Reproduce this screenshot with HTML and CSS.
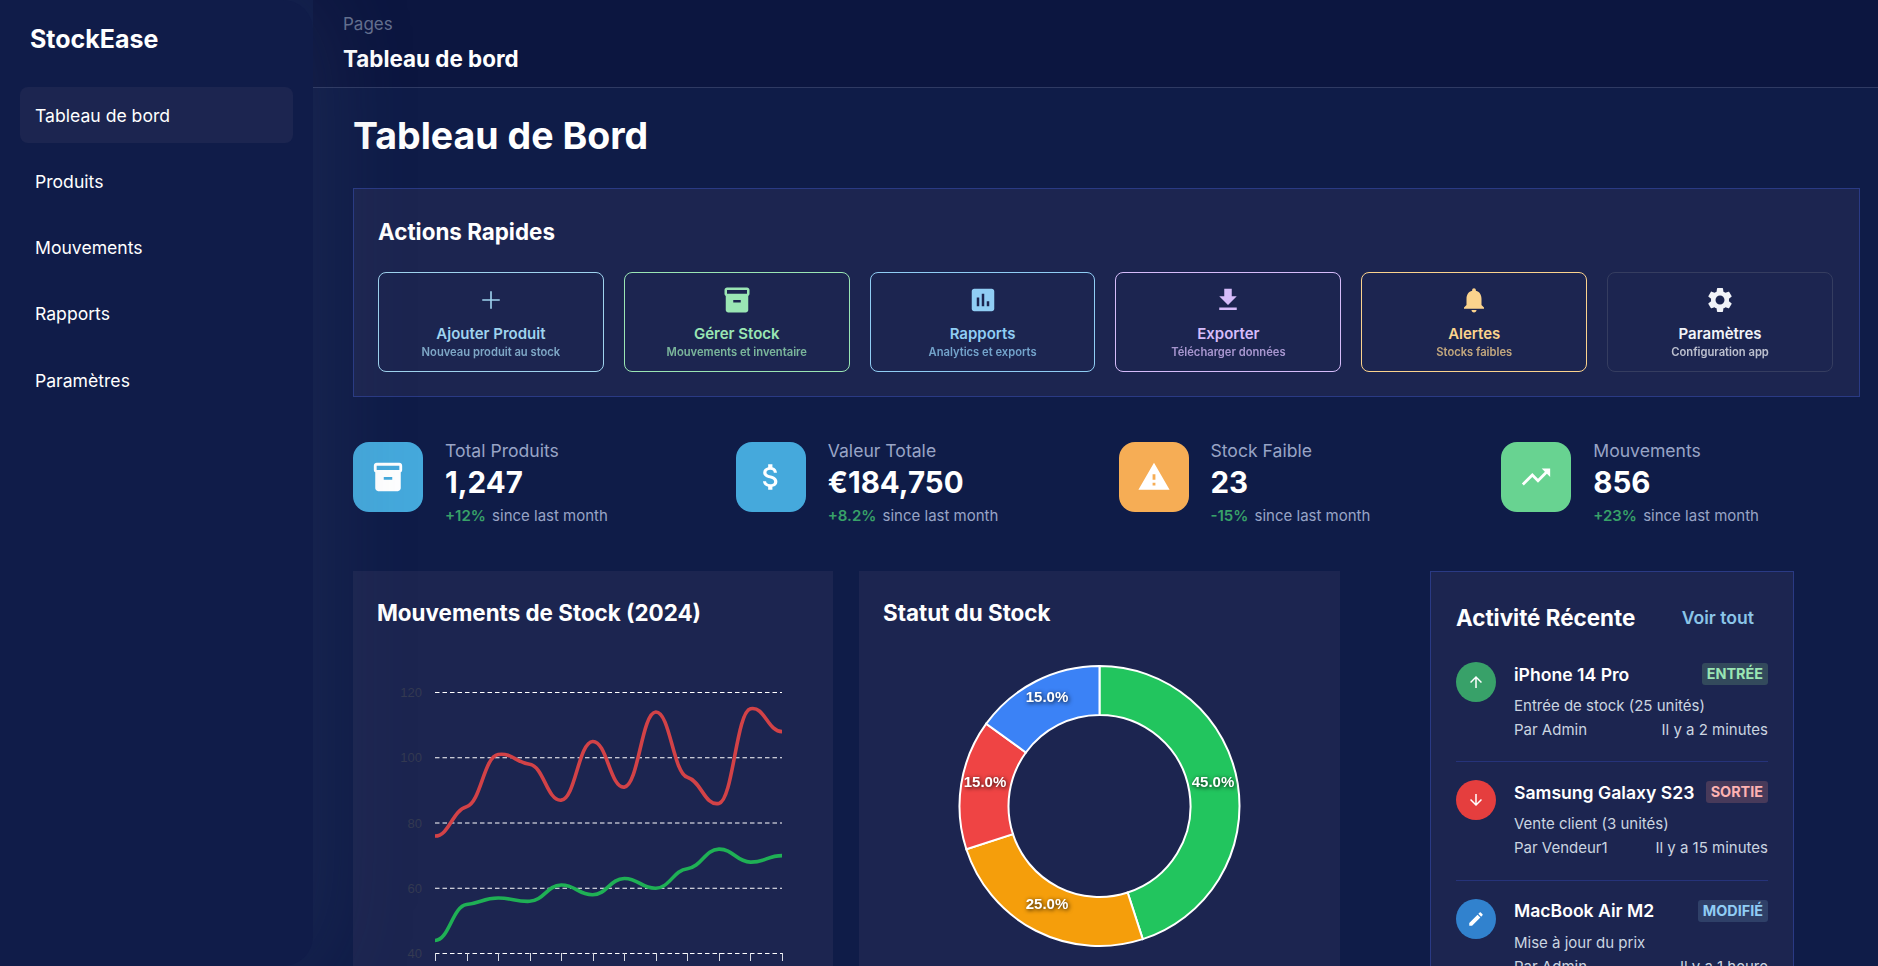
FILE: index.html
```html
<!DOCTYPE html>
<html lang="fr">
<head>
    <meta charset="UTF-8">
    <meta name="viewport" content="width=device-width, initial-scale=1.0">
    <title>StockEase</title>
    <link rel="stylesheet" href="styles.css">
</head>
<body>
<div class="layout">
    <aside class="sidebar">
        <div class="brand">StockEase</div>
        <nav class="side-nav">
            <a class="nav-item active">Tableau de bord</a>
            <a class="nav-item">Produits</a>
            <a class="nav-item">Mouvements</a>
            <a class="nav-item">Rapports</a>
            <a class="nav-item">Paramètres</a>
        </nav>
    </aside>

    <div class="main">
        <header class="topbar">
            <div class="crumb">Pages</div>
            <div class="crumb-title">Tableau de bord</div>
        </header>

        <main class="content">
            <h1 class="page-title">Tableau de Bord</h1>

            <section class="quick-card">
                <h2 class="quick-title">Actions Rapides</h2>
                <div class="quick-grid">
                    <a class="quick-btn blue">
                        <svg class="quick-icon" viewBox="0 0 24 24"><path d="M12 5v14M5 12h14" fill="none" stroke="currentColor" stroke-width="1.3"/></svg>
                        <span class="quick-label">Ajouter Produit</span>
                        <span class="quick-sub">Nouveau produit au stock</span>
                    </a>
                    <a class="quick-btn green">
                        <svg class="quick-icon" viewBox="0 0 24 24"><path d="M20 2H4c-1 0-2 .9-2 2v3.01c0 .72.43 1.34 1 1.69V20c0 1.1 1.1 2 2 2h14c.9 0 2-.9 2-2V8.7c.57-.35 1-.97 1-1.69V4c0-1.1-1-2-2-2zm-5 12H9v-2h6v2zm5-7H4V4l16-.02V7z"/></svg>
                        <span class="quick-label">Gérer Stock</span>
                        <span class="quick-sub">Mouvements et inventaire</span>
                    </a>
                    <a class="quick-btn sky">
                        <svg class="quick-icon" viewBox="0 0 24 24"><path d="M19 3H5c-1.1 0-2 .9-2 2v14c0 1.1.9 2 2 2h14c1.100 0 2-.9 2-2V5c0-1.100-.9-2-2-2zM9 17H7v-7h2v7zm4 0h-2V7h2v10zm4 0h-2v-4h2v4z"/></svg>
                        <span class="quick-label">Rapports</span>
                        <span class="quick-sub">Analytics et exports</span>
                    </a>
                    <a class="quick-btn purple">
                        <svg class="quick-icon" viewBox="0 0 24 24"><path d="M19 9h-4V3H9v6H5l7 7 7-7zM5 18v2h14v-2H5z"/></svg>
                        <span class="quick-label">Exporter</span>
                        <span class="quick-sub">Télécharger données</span>
                    </a>
                    <a class="quick-btn amber">
                        <svg class="quick-icon" viewBox="0 0 24 24"><path d="M12 22c1.100 0 2-.9 2-2h-4c0 1.100.89 2 2 2zm6-6v-5c0-3.070-1.640-5.640-4.500-6.320V4c0-.83-.67-1.500-1.500-1.500s-1.500.67-1.500 1.500v.68C7.630 5.360 6 7.920 6 11v5l-2 2v1h16v-1l-2-2z"/></svg>
                        <span class="quick-label">Alertes</span>
                        <span class="quick-sub">Stocks faibles</span>
                    </a>
                    <a class="quick-btn plain">
                        <svg class="quick-icon" viewBox="0 0 24 24"><path d="M19.14 12.94c.04-.3.06-.61.06-.94 0-.32-.02-.64-.07-.94l2.030-1.580c.18-.14.23-.41.12-.61l-1.920-3.320c-.12-.22-.37-.29-.59-.22l-2.390.96c-.5-.38-1.030-.7-1.620-.94l-.36-2.540c-.04-.24-.24-.41-.48-.41h-3.840c-.24 0-.43.17-.47.41l-.36 2.540c-.59.24-1.130.57-1.620.94l-2.390-.96c-.22-.08-.47 0-.59.22L2.740 8.870c-.12.21-.08.47.12.61l2.030 1.580c-.05.3-.09.63-.09.94s.02.64.07.94l-2.030 1.580c-.18.14-.23.41-.12.61l1.920 3.320c.12.22.37.29.59.22l2.390-.96c.5.38 1.030.7 1.620.94l.36 2.540c.05.24.24.41.48.41h3.840c.24 0 .44-.17.47-.41l.36-2.540c.59-.24 1.130-.56 1.620-.94l2.390.96c.22.08.47 0 .59-.22l1.920-3.320c.12-.22.07-.47-.12-.61l-2.010-1.580zM12 15.600c-1.980 0-3.600-1.620-3.600-3.600s1.620-3.600 3.600-3.600 3.600 1.620 3.600 3.600-1.620 3.600-3.600 3.600z"/></svg>
                        <span class="quick-label">Paramètres</span>
                        <span class="quick-sub">Configuration app</span>
                    </a>
                </div>
            </section>

            <section class="stats">
                <div class="stat">
                    <div class="stat-icon bg-blue">
                        <svg viewBox="0 0 24 24"><path d="M20 2H4c-1 0-2 .9-2 2v3.01c0 .72.43 1.34 1 1.69V20c0 1.1 1.1 2 2 2h14c.9 0 2-.9 2-2V8.7c.57-.35 1-.97 1-1.69V4c0-1.1-1-2-2-2zm-5 12H9v-2h6v2zm5-7H4V4l16-.02V7z"/></svg>
                    </div>
                    <div class="stat-body">
                        <div class="stat-label">Total Produits</div>
                        <div class="stat-value">1,247</div>
                        <div class="stat-change"><b>+12%</b> since last month</div>
                    </div>
                </div>
                <div class="stat">
                    <div class="stat-icon bg-blue">
                        <svg viewBox="0 0 24 24"><path d="M11.800 10.900c-2.270-.59-3-1.200-3-2.150 0-1.090 1.010-1.850 2.700-1.850 1.780 0 2.440.85 2.500 2.100h2.210c-.07-1.720-1.120-3.300-3.210-3.810V3h-3v2.160c-1.940.42-3.500 1.680-3.500 3.610 0 2.310 1.910 3.460 4.700 4.130 2.500.6 3 1.480 3 2.410 0 .69-.49 1.790-2.700 1.790-2.060 0-2.870-.92-2.980-2.100h-2.200c.12 2.190 1.760 3.420 3.680 3.830V21h3v-2.150c1.950-.37 3.500-1.500 3.500-3.550 0-2.840-2.430-3.810-4.700-4.400z"/></svg>
                    </div>
                    <div class="stat-body">
                        <div class="stat-label">Valeur Totale</div>
                        <div class="stat-value">€184,750</div>
                        <div class="stat-change"><b>+8.2%</b> since last month</div>
                    </div>
                </div>
                <div class="stat">
                    <div class="stat-icon bg-orange">
                        <svg viewBox="0 0 24 24"><path d="M1 21h22L12 2 1 21zm12-3h-2v-2h2v2zm0-4h-2v-4h2v4z"/></svg>
                    </div>
                    <div class="stat-body">
                        <div class="stat-label">Stock Faible</div>
                        <div class="stat-value">23</div>
                        <div class="stat-change"><b>-15%</b> since last month</div>
                    </div>
                </div>
                <div class="stat">
                    <div class="stat-icon bg-green">
                        <svg viewBox="0 0 24 24"><path d="M16 6l2.290 2.290-4.880 4.880-4-4L2 16.590 3.410 18l6-6 4 4 6.300-6.290L22 12V6z"/></svg>
                    </div>
                    <div class="stat-body">
                        <div class="stat-label">Mouvements</div>
                        <div class="stat-value">856</div>
                        <div class="stat-change"><b>+23%</b> since last month</div>
                    </div>
                </div>
            </section>

            <section class="panels">
                <div class="panel">
                    <h3 class="panel-title">Mouvements de Stock (2024)</h3>
                    <svg class="chart" id="line-chart" viewBox="0 0 431 330"></svg>
                </div>

                <div class="panel">
                    <h3 class="panel-title">Statut du Stock</h3>
                    <svg class="chart" viewBox="0 0 431 330">
                        <g class="slices">
                            <path fill="#22c55e" d="M215.5 16A140 140 0 0 1 258.76 289.15L243.62 242.55A91 91 0 0 0 215.5 65Z"/>
                            <path fill="#f59e0b" d="M258.76 289.15A140 140 0 0 1 82.35 199.26L128.95 184.12A91 91 0 0 0 243.62 242.55Z"/>
                            <path fill="#ef4444" d="M82.35 199.26A140 140 0 0 1 102.24 73.71L141.88 102.51A91 91 0 0 0 128.95 184.12Z"/>
                            <path fill="#3b82f6" d="M102.24 73.71A140 140 0 0 1 215.5 16L215.5 65A91 91 0 0 0 141.88 102.51Z"/>
                        </g>
                        <g class="slice-labels">
                            <text x="329" y="137">45.0%</text>
                            <text x="163" y="259">25.0%</text>
                            <text x="101" y="137">15.0%</text>
                            <text x="163" y="52">15.0%</text>
                        </g>
                    </svg>
                </div>

                <div class="panel activity">
                    <div class="activity-head">
                        <h3 class="activity-title">Activité Récente</h3>
                        <a class="see-all">Voir tout</a>
                    </div>

                    <div class="activity-list">
                        <div class="activity-item">
                            <div class="activity-icon in">
                                <svg viewBox="0 0 24 24"><path d="M4 12l1.410 1.410L11 7.830V20h2V7.830l5.580 5.590L20 12l-8-8-8 8z"/></svg>
                            </div>
                            <div class="activity-body">
                                <div class="activity-top">
                                    <span class="activity-name">iPhone 14 Pro</span>
                                    <span class="badge badge-in">ENTRÉE</span>
                                </div>
                                <div class="activity-desc">Entrée de stock (25 unités)</div>
                                <div class="activity-meta"><span>Par Admin</span><span>Il y a 2 minutes</span></div>
                            </div>
                        </div>

                        <div class="activity-item">
                            <div class="activity-icon out">
                                <svg viewBox="0 0 24 24"><path d="M20 12l-1.410-1.410L13 16.170V4h-2v12.170l-5.580-5.590L4 12l8 8 8-8z"/></svg>
                            </div>
                            <div class="activity-body">
                                <div class="activity-top">
                                    <span class="activity-name">Samsung Galaxy S23</span>
                                    <span class="badge badge-out">SORTIE</span>
                                </div>
                                <div class="activity-desc">Vente client (3 unités)</div>
                                <div class="activity-meta"><span>Par Vendeur1</span><span>Il y a 15 minutes</span></div>
                            </div>
                        </div>

                        <div class="activity-item">
                            <div class="activity-icon edit">
                                <svg viewBox="0 0 24 24"><path d="M3 17.250V21h3.750L17.810 9.940l-3.750-3.750L3 17.250zM20.710 7.040c.39-.39.39-1.020 0-1.410l-2.340-2.340c-.39-.39-1.020-.39-1.410 0l-1.830 1.830 3.750 3.750 1.830-1.830z"/></svg>
                            </div>
                            <div class="activity-body">
                                <div class="activity-top">
                                    <span class="activity-name">MacBook Air M2</span>
                                    <span class="badge badge-edit">MODIFIÉ</span>
                                </div>
                                <div class="activity-desc">Mise à jour du prix</div>
                                <div class="activity-meta"><span>Par Admin</span><span>Il y a 1 heure</span></div>
                            </div>
                        </div>
                    </div>
                </div>
            </section>
        </main>
    </div>
</div>
<script src="script.js"></script>
</body>
</html>
```

FILE: styles.css
```css
* {
    box-sizing: border-box;
}
html, body {
    height: 100%;
}
body {
    margin: 0;
    background-color: #0f1c48;
    color: #fff;
    font-family: Inter, "Noto Sans", sans-serif;
    overflow: hidden;
}
h1, h2, h3 {
    margin: 0;
}

.layout {
    display: flex;
    height: 100vh;
}

/* sidebar */
.sidebar {
    flex: 0 0 313px;
    position: relative;
    z-index: 2;
    background-color: #101c49;
    border-radius: 0 30px 30px 0;
    box-shadow: 0 0 100px rgba(70, 85, 120, 0.25);
    padding: 21px 20px 20px;
}
.brand {
    font-size: 25px;
    font-weight: 700;
    line-height: 36px;
    padding-left: 10px;
}
.side-nav {
    display: flex;
    flex-direction: column;
    gap: 10.25px;
    margin-top: 30px;
}
.nav-item {
    height: 56px;
    display: flex;
    align-items: center;
    padding-left: 15px;
    border-radius: 8px;
    font-size: 17.6px;
}
.nav-item.active {
    background-color: #1c2550;
}

/* top bar */
.main {
    flex: 1;
    min-width: 0;
}
.topbar {
    height: 88px;
    padding: 12px 30px 0;
    background-color: #0c1640;
    border-bottom: 1px solid #2f3a63;
}
.crumb {
    font-size: 17px;
    line-height: 24px;
    color: #64708f;
}
.crumb-title {
    font-size: 22.4px;
    font-weight: 700;
    line-height: 28px;
    margin-top: 9px;
}

.content {
    padding: 0 18px 0 40px;
}
.page-title {
    font-size: 37.5px;
    font-weight: 700;
    line-height: 48px;
    margin-top: 24px;
}

/* quick actions */
.quick-card {
    margin-top: 28px;
    padding: 25px 26px 25px 24px;
    height: 209px;
    background-color: #1c2550;
    border: 1px solid #2a3a84;
}
.quick-title {
    font-size: 22.4px;
    font-weight: 700;
    line-height: 36px;
}
.quick-grid {
    display: grid;
    grid-template-columns: repeat(6, 1fr);
    gap: 20px;
    margin-top: 22px;
}
.quick-btn {
    height: 100px;
    display: flex;
    flex-direction: column;
    align-items: center;
    padding-top: 12px;
    border: 1px solid currentColor;
    border-radius: 8px;
}
.quick-icon {
    width: 30px;
    height: 30px;
    fill: currentColor;
}
.quick-label {
    font-size: 15px;
    font-weight: 600;
    line-height: 20px;
    margin-top: 9px;
}
.quick-sub {
    font-size: 11.2px;
    font-weight: 600;
    line-height: 16px;
    opacity: 0.75;
}
.quick-btn.blue { color: #9fd3ee; }
.quick-btn.green { color: #9ae6b4; }
.quick-btn.sky { color: #90cdf4; }
.quick-btn.purple { color: #d6bcfa; }
.quick-btn.amber { color: #fbd38d; }
.quick-btn.plain {
    color: #f1f3f8;
    border-color: #353d60;
}

/* stats */
.stats {
    display: grid;
    grid-template-columns: repeat(4, 1fr);
    gap: 24px;
    margin-top: 45px;
}
.stat {
    display: flex;
    gap: 22px;
}
.stat-icon {
    flex: 0 0 70px;
    height: 70px;
    border-radius: 16px;
    display: flex;
    align-items: center;
    justify-content: center;
}
.stat-icon svg {
    width: 34px;
    height: 34px;
    fill: #fff;
}
.bg-blue { background-color: #45a9dc; }
.bg-orange { background-color: #f6ad55; }
.bg-green { background-color: #68d391; }
.stat-label {
    font-size: 17.6px;
    line-height: 20px;
    color: #98a4c6;
    margin-top: -1px;
}
.stat-value {
    font-size: 29.5px;
    font-weight: 700;
    line-height: 40px;
    margin-top: 1px;
}
.stat-change {
    font-size: 15px;
    line-height: 20px;
    color: #98a4c6;
    margin-top: 4px;
}
.stat-change b {
    color: #38a169;
    font-weight: 600;
    margin-right: 2px;
}

/* panels */
.panels {
    display: grid;
    grid-template-columns: 480px 481px 1fr;
    gap: 26px;
    margin-top: 45px;
}
.panel {
    background-color: #1c2550;
    padding: 25px 24px;
    height: 600px;
}
.panel-title {
    font-size: 22.4px;
    font-weight: 700;
    line-height: 34px;
    margin-bottom: 20px;
}
.chart {
    display: block;
    width: 431px;
    height: 330px;
    margin-left: 1px;
    overflow: visible;
}
.axis-label {
    font-family: "Liberation Sans", Arial, sans-serif;
    font-size: 13px;
    fill: #343a52;
    text-anchor: end;
}
.grid-line {
    stroke: #fff;
    stroke-width: 1;
    stroke-dasharray: 4.5 3;
}
.tick {
    stroke: #d8dbe4;
    stroke-width: 1;
}
.series {
    fill: none;
    stroke-width: 3.6;
}
.series.red { stroke: #d24247; }
.series.green { stroke: #1fb055; }

.slices path {
    stroke: #fff;
    stroke-width: 2;
}
.slice-labels text {
    font-family: "Liberation Sans", Arial, sans-serif;
    font-size: 15px;
    font-weight: 700;
    fill: #fff;
    text-anchor: middle;
    filter: drop-shadow(1px 1px 2px rgba(0, 0, 0, 0.85));
}

/* activity */
.panel.activity {
    width: 364px;
    margin-left: 64px;
    padding: 25px;
    border: 1px solid #2a3a84;
}
.activity-head {
    display: flex;
    align-items: center;
    justify-content: space-between;
    height: 34px;
    margin-top: 3px;
}
.activity-title {
    font-size: 22.4px;
    font-weight: 700;
}
.see-all {
    font-size: 17.6px;
    font-weight: 600;
    color: #8bc5e8;
    padding: 0 14px;
}
.activity-list {
    margin-top: 10px;
}
.activity-item {
    display: flex;
    gap: 18px;
    height: 118.25px;
    padding-top: 18px;
    border-bottom: 1px solid #26337a;
}
.activity-icon {
    flex: 0 0 40px;
    height: 40px;
    border-radius: 50%;
    display: flex;
    align-items: center;
    justify-content: center;
}
.activity-icon svg {
    width: 18px;
    height: 18px;
    fill: #fff;
}
.activity-icon.in { background-color: #38a169; }
.activity-icon.out { background-color: #e53e3e; }
.activity-icon.edit { background-color: #3182ce; }
.activity-body {
    flex: 1;
    min-width: 0;
}
.activity-top {
    display: flex;
    align-items: center;
    justify-content: space-between;
    height: 26px;
    margin-top: -1px;
}
.activity-name {
    font-size: 17.6px;
    font-weight: 600;
}
.badge {
    font-size: 14.4px;
    font-weight: 700;
    line-height: 22px;
    padding: 0 5px;
    border-radius: 3px;
}
.badge-in { color: #9ae6b4; background-color: #334a5c; }
.badge-out { color: #feb2b2; background-color: #483a5a; }
.badge-edit { color: #90cdf4; background-color: #2f4068; }
.activity-desc {
    font-size: 15px;
    line-height: 20px;
    color: #cbd5e0;
    margin-top: 9px;
}
.activity-meta {
    display: flex;
    justify-content: space-between;
    font-size: 15px;
    line-height: 20px;
    color: #cbd5e0;
    margin-top: 4px;
}
```

FILE: script.js
```js
const chart = document.getElementById('line-chart');
const NS = 'http://www.w3.org/2000/svg';

const left = 57;
const right = 404;
const yFor = (v) => 303.5 - (v - 40) * 3.2625;
const xFor = (i) => left + i * (right - left) / 11;

const sorties = [76, 85, 101, 98, 87, 105, 91, 114, 94, 86, 115, 108];
const entrees = [44, 55, 57, 56, 61, 58, 63, 60, 66, 72, 68, 70];

function add(tag, attrs, text) {
    const el = document.createElementNS(NS, tag);
    Object.keys(attrs).forEach(k => el.setAttribute(k, attrs[k]));
    if (text) el.textContent = text;
    chart.appendChild(el);
}

// nearly flat at each point, steep in between
function curve(values) {
    const pts = values.map((v, i) => [xFor(i), yFor(v)]);
    const step = xFor(1) - xFor(0);
    const h = step * 0.45;
    const slope = (i) => {
        if (i === 0 || i === pts.length - 1) return 0;
        return (pts[i + 1][1] - pts[i - 1][1]) / (2 * step) * 0.2;
    };
    let d = `M${pts[0][0]} ${pts[0][1]}`;
    for (let i = 1; i < pts.length; i++) {
        const a = pts[i - 1];
        const b = pts[i];
        d += `C${a[0] + h} ${a[1] + h * slope(i - 1)} ${b[0] - h} ${b[1] - h * slope(i)} ${b[0]} ${b[1]}`;
    }
    return d;
}

[120, 100, 80, 60, 40].forEach(v => {
    const y = yFor(v);
    add('line', { class: 'grid-line', x1: left, x2: right, y1: y, y2: y });
    add('text', { class: 'axis-label', x: 44, y: y + 4.5 }, String(v));
});

for (let i = 0; i < 12; i++) {
    const x = Math.round(xFor(i)) + 0.5;
    add('line', { class: 'tick', x1: x, x2: x, y1: 303, y2: 311 });
}

add('path', { class: 'series red', d: curve(sorties) });
add('path', { class: 'series green', d: curve(entrees) });
```
